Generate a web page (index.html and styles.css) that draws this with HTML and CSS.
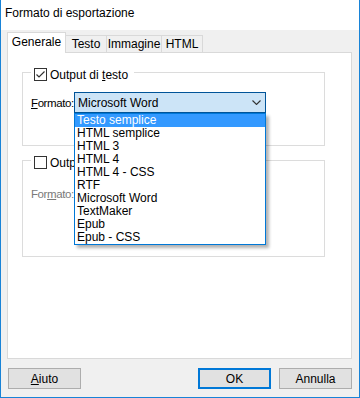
FILE: index.html
```html
<!DOCTYPE html>
<html lang="it">
<head>
    <meta charset="UTF-8">
    <meta name="viewport" content="width=device-width, initial-scale=1.0">
    <title>Formato di esportazione</title>
    <link rel="stylesheet" href="styles.css">
</head>
<body>
    <div class="window">
        <div class="titlebar">Formato di esportazione</div>
        <div class="client">
            <div class="tabs">
                <div class="tab tab-generale active">Generale</div>
                <div class="tab tab-testo">Testo</div>
                <div class="tab tab-immagine">Immagine</div>
                <div class="tab tab-html">HTML</div>
            </div>

            <div class="panel">
                <div class="group">
                    <div class="legend">
                        <span class="check">
                            <svg width="11" height="11" viewBox="0 0 11 11"><polyline points="1.5,5.5 4,8 9.5,2.5" fill="none" stroke="#333" stroke-width="1.2"/></svg>
                        </span>
                        <span>Output di <u>t</u>esto</span>
                    </div>
                    <div class="field">
                        <label><u>F</u>ormato:</label>
                        <div class="combo focused">
                            <span>Microsoft Word</span>
                            <svg class="chevron" width="9" height="5" viewBox="0 0 9 5"><polyline points="0.5,0.5 4.5,4.5 8.5,0.5" fill="none" stroke="#333" stroke-width="1.1"/></svg>
                            <ul class="listbox">
                                <li class="selected">Testo semplice</li>
                                <li>HTML semplice</li>
                                <li>HTML 3</li>
                                <li>HTML 4</li>
                                <li>HTML 4 - CSS</li>
                                <li>RTF</li>
                                <li>Microsoft Word</li>
                                <li>TextMaker</li>
                                <li>Epub</li>
                                <li>Epub - CSS</li>
                            </ul>
                        </div>
                    </div>
                </div>

                <div class="group group-html">
                    <div class="legend">
                        <span class="check"></span>
                        <span>Output di HTML</span>
                    </div>
                    <div class="field disabled">
                        <label>For<u>m</u>ato:</label>
                        <div class="combo"></div>
                    </div>
                </div>
            </div>

            <div class="buttons">
                <button class="btn btn-help"><u>A</u>iuto</button>
                <button class="btn btn-default">OK</button>
                <button class="btn">Annulla</button>
            </div>
        </div>
    </div>
</body>
</html>
```

FILE: styles.css
```css
body {
    margin: 0;
    font-family: "Liberation Sans", Arial, sans-serif;
    font-size: 12px;
    color: #000;
}
.window {
    width: 360px;
    height: 398px;
    box-sizing: border-box;
    border: 1px solid #1883d7;
    border-top: none;
    background-color: #f0f0f0;
    display: flex;
    flex-direction: column;
}
.titlebar {
    height: 30px;
    line-height: 27px;
    padding-left: 4px;
    background-color: #fff;
}
.client {
    flex: 1;
    padding: 2px 7px 0 6px;
}
.tabs {
    display: flex;
    align-items: flex-end;
    height: 20px;
}
.tab {
    box-sizing: border-box;
    height: 17px;
    line-height: 16px;
    text-align: center;
    border: 1px solid #d9d9d9;
    border-bottom: none;
    margin-left: -1px;
    background-color: #f0f0f0;
}
.tab.active {
    position: relative;
    z-index: 1;
    height: 21px;
    line-height: 19px;
    margin-left: 0;
    margin-bottom: -1px;
    background-color: #fff;
}
.tab-generale { width: 59px; }
.tab-testo { width: 42px; }
.tab-immagine { width: 56px; }
.tab-html { width: 42px; }
.panel {
    box-sizing: border-box;
    height: 307px;
    border: 1px solid #d9d9d9;
    background-color: #fff;
    padding-top: 19px;
}
.group {
    margin: 0 26px 0 14px;
    border: 1px solid #dcdcdc;
    padding-bottom: 32px;
}
.group-html {
    margin-top: 14px;
    padding-bottom: 52px;
}
.legend {
    display: flex;
    align-items: center;
    gap: 3px;
    width: fit-content;
    height: 13px;
    margin: -5px 0 0 8px;
    padding: 0 6px 0 3px;
    background-color: #fff;
}
.check {
    box-sizing: border-box;
    width: 13px;
    height: 13px;
    border: 1px solid #333;
    background-color: #fff;
    display: flex;
}
.field {
    display: flex;
    align-items: center;
    margin-top: 11px;
    padding-left: 8px;
}
.group-html .field {
    margin-top: 14px;
}
.field label {
    flex: none;
    width: 43px;
    white-space: nowrap;
    font-size: 11.5px;
    letter-spacing: -0.4px;
}
.field.disabled label {
    color: #7a7a7a;
}
.combo {
    position: relative;
    flex: none;
    box-sizing: border-box;
    width: 192px;
    height: 21px;
    display: flex;
    align-items: center;
    justify-content: space-between;
    padding: 0 4px 0 3px;
    border: 1px solid #adadad;
    background-color: #e5e5e5;
}
.combo.focused {
    border-color: #005499;
    background-color: #cce4f7;
}
.listbox {
    position: absolute;
    z-index: 5;
    top: calc(100% + 1px);
    left: -1px;
    box-sizing: border-box;
    width: 192px;
    margin: 0;
    padding: 0;
    list-style: none;
    border: 1px solid #0078d7;
    background-color: #fff;
    box-shadow: 3px 3px 3px rgba(0,0,0,0.3);
}
.listbox li {
    height: 13px;
    line-height: 13px;
    padding-left: 2px;
}
.listbox li.selected {
    background-color: #3399ff;
    color: #fff;
}
.buttons {
    display: flex;
    gap: 8px;
    margin-top: 9px;
    padding-left: 1px;
}
.btn {
    box-sizing: border-box;
    width: 73px;
    height: 21px;
    padding: 0;
    font-family: inherit;
    font-size: 12px;
    color: #000;
    border: 1px solid #adadad;
    background-color: #e1e1e1;
}
.btn-help {
    margin-right: auto;
}
.btn-default {
    border: 2px solid #0078d7;
}
```
